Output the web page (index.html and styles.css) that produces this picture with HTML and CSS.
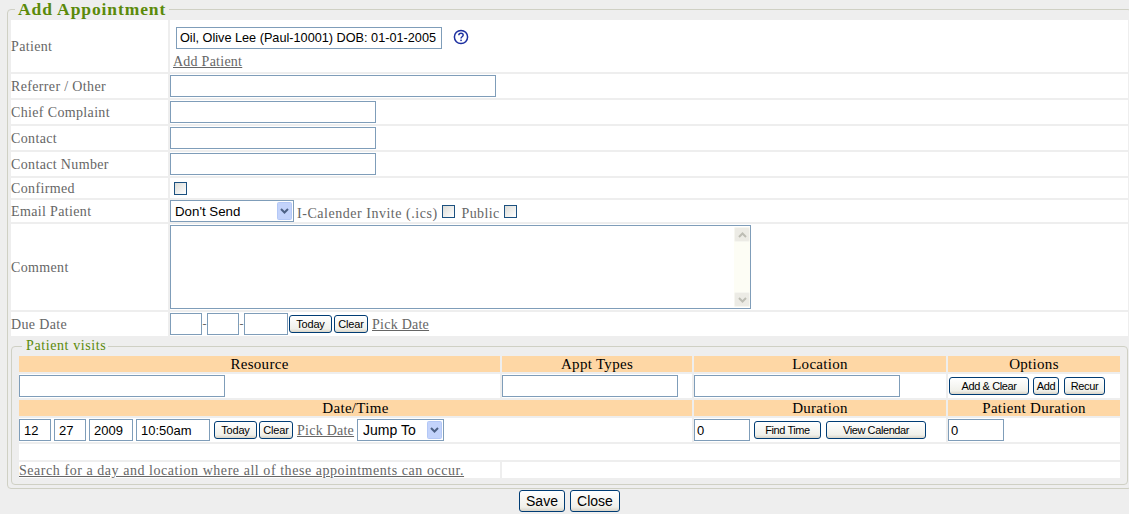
FILE: index.html
```html
<!DOCTYPE html>
<html lang="en">
<head>
  <meta charset="UTF-8" />
  <title>Add Appointment</title>
  <link rel="stylesheet" href="styles.css">
</head>
<body>
  <form id="form">
    <fieldset class="main-box">
      <legend>Add Appointment</legend>
      <table class="form-table">
        <colgroup><col class="label-col"><col></colgroup>
        <tr class="row-patient">
          <td class="label">Patient</td>
          <td class="patient-cell">
            <div class="patient-line">
              <input type="text" class="input-patient" value="Oil, Olive Lee (Paul-10001) DOB: 01-01-2005">
              <svg class="help-icon" width="16" height="16" viewBox="0 0 16 16">
                <circle cx="8" cy="8" r="6.6" fill="#fff" stroke="#1c2fa0" stroke-width="1.5"/>
                <path d="M5.800 6.300c0-1.400 1-2.100 2.200-2.100s2.200.7 2.200 1.900c0 1.700-2.200 1.600-2.200 3.300" fill="none" stroke="#1c2fa0" stroke-width="1.400"/>
                <rect x="7.300" y="10.600" width="1.500" height="1.500" fill="#1c2fa0"/>
              </svg>
            </div>
            <a class="link add-patient" href="#">Add Patient</a>
          </td>
        </tr>
        <tr class="row-input">
          <td class="label">Referrer / Other</td>
          <td><input type="text" class="input-wide"></td>
        </tr>
        <tr class="row-input">
          <td class="label">Chief Complaint</td>
          <td><input type="text" class="input-mid"></td>
        </tr>
        <tr class="row-input">
          <td class="label">Contact</td>
          <td><input type="text" class="input-mid"></td>
        </tr>
        <tr class="row-input">
          <td class="label">Contact Number</td>
          <td><input type="text" class="input-mid"></td>
        </tr>
        <tr class="row-check">
          <td class="label">Confirmed</td>
          <td><input type="checkbox" class="check check-confirmed"></td>
        </tr>
        <tr class="row-email">
          <td class="label">Email Patient</td>
          <td>
            <div class="inline-line">
              <select class="select select-email"><option>Don't Send</option></select>
              <span class="text ics-text">I-Calender Invite (.ics)</span>
              <input type="checkbox" class="check">
              <span class="text public-text">Public</span>
              <input type="checkbox" class="check">
            </div>
          </td>
        </tr>
        <tr class="row-comment">
          <td class="label">Comment</td>
          <td>
            <div class="comment-wrap">
              <textarea class="comment"></textarea>
              <div class="scrollbar">
                <span class="scroll-btn">
                  <svg width="9" height="6" viewBox="0 0 9 6"><path d="M1 5l3.500-3.500L8 5" fill="none" stroke="#bdbdb4" stroke-width="2"/></svg>
                </span>
                <span class="scroll-btn">
                  <svg width="9" height="6" viewBox="0 0 9 6"><path d="M1 1l3.500 3.500L8 1" fill="none" stroke="#bdbdb4" stroke-width="2"/></svg>
                </span>
              </div>
            </div>
          </td>
        </tr>
        <tr class="row-input">
          <td class="label">Due Date</td>
          <td>
            <div class="inline-line">
              <input type="text" class="input-md">
              <span class="dash">-</span>
              <input type="text" class="input-md">
              <span class="dash">-</span>
              <input type="text" class="input-y">
              <button type="button" class="btn btn-today">Today</button>
              <button type="button" class="btn btn-clear">Clear</button>
              <a class="link pick-date" href="#">Pick Date</a>
            </div>
          </td>
        </tr>
        <tr>
          <td colspan="2" class="visits-cell">
            <fieldset class="visits-box">
              <legend>Patient visits</legend>
              <table class="visits-table">
                <colgroup><col class="c1"><col class="c2"><col class="c3"><col class="c4"></colgroup>
                <tr class="head">
                  <th>Resource</th><th>Appt Types</th><th>Location</th><th>Options</th>
                </tr>
                <tr class="row-input">
                  <td><input type="text" class="input-mid"></td>
                  <td><input type="text" class="input-type"></td>
                  <td><input type="text" class="input-mid"></td>
                  <td>
                    <div class="inline-line">
                      <button type="button" class="btn btn-addclear">Add &amp; Clear</button>
                      <button type="button" class="btn btn-add">Add</button>
                      <button type="button" class="btn btn-recur">Recur</button>
                    </div>
                  </td>
                </tr>
                <tr class="head">
                  <th colspan="2">Date/Time</th><th>Duration</th><th>Patient Duration</th>
                </tr>
                <tr class="row-input">
                  <td colspan="2">
                    <div class="inline-line date-line">
                      <input type="text" class="input-md" value="12">
                      <input type="text" class="input-md" value="27">
                      <input type="text" class="input-y" value="2009">
                      <input type="text" class="input-time" value="10:50am">
                      <button type="button" class="btn btn-today">Today</button>
                      <button type="button" class="btn btn-clear">Clear</button>
                      <a class="link pick-date" href="#">Pick Date</a>
                      <select class="select select-jump"><option>Jump To</option></select>
                    </div>
                  </td>
                  <td>
                    <div class="inline-line">
                      <input type="text" class="input-dur" value="0">
                      <button type="button" class="btn btn-find">Find Time</button>
                      <button type="button" class="btn btn-view">View Calendar</button>
                    </div>
                  </td>
                  <td><input type="text" class="input-dur" value="0"></td>
                </tr>
                <tr class="row-empty"><td colspan="4"></td></tr>
                <tr class="row-search">
                  <td><a class="link search-link" href="#">Search for a day and location where all of these appointments can occur.</a></td>
                  <td colspan="3"></td>
                </tr>
              </table>
            </fieldset>
          </td>
        </tr>
      </table>
    </fieldset>
    <div class="actions">
      <button type="button" class="btn btn-big">Save</button>
      <button type="button" class="btn btn-big">Close</button>
    </div>
  </form>
</body>
</html>
```

FILE: styles.css
```css
html, body {
  height: 100%;
}

body {
  margin: 0;
  background: #eeeeee;
  font-family: "Liberation Serif", serif;
  font-size: 14px;
  color: #666666;
  overflow: hidden;
}

/* outer box */
.main-box {
  box-sizing: border-box;
  width: 1125px;
  margin: 0 0 0 7px;
  padding: 0 1px 1px;
  border: 1px solid #cfd0c4;
  border-radius: 4px;
  min-inline-size: 0;
}

.main-box > legend {
  margin-left: 6px;
  padding: 0 3px;
  font-size: 17.5px;
  line-height: 18px;
  font-weight: bold;
  letter-spacing: 0.9px;
  color: #5b8a0a;
}

table {
  border-spacing: 2px;
  border-collapse: separate;
  table-layout: fixed;
}

td, th {
  box-sizing: border-box;
  padding: 0;
}

td {
  background: #fff;
}

.form-table {
  width: 1121px;
}

.label-col {
  width: 157px;
}

.label {
  padding-top: 2px;
  letter-spacing: 0.35px;
}

.row-patient td { height: 52px; }
.row-input td { height: 24px; }
.row-check td { height: 20px; }
.row-email td { height: 22px; }
.row-comment td { height: 86px; }

input[type="text"], textarea, .select {
  box-sizing: border-box;
  display: block;
  margin: 0;
  height: 22px;
  padding: 0 4px;
  border: 1px solid #7f9db9;
  border-radius: 0;
  background-color: #fff;
  color: #000;
  font-family: "Liberation Sans", sans-serif;
  font-size: 13px;
  outline: none;
}

.patient-cell {
  vertical-align: top;
}

.patient-line {
  display: flex;
  align-items: center;
  margin: 7px 0 0 6px;
}

input.input-patient {
  width: 266px;
  padding: 0 2px 0 3px;
  font-size: 12.7px;
}

.help-icon { margin: -3px 0 0 11px; }

.add-patient {
  display: block;
  margin: 5px 0 0 3px;
  line-height: 16px;
  letter-spacing: 0.65px;
}

.link {
  color: #666666;
  text-decoration: underline;
  letter-spacing: 0.25px;
}

.input-wide { width: 326px; }
.input-mid { width: 206px; }
input.input-md { width: 32px; }
input.input-y { width: 44px; }
.input-type { width: 176px; }
.input-time { width: 74px; }
input.input-dur { width: 56px; padding: 0 2px; }

.check {
  appearance: none;
  box-sizing: border-box;
  display: block;
  width: 13px;
  height: 13px;
  margin: 0;
  border: 1px solid #1c5180;
  background: linear-gradient(135deg, #dcdcd7, #ffffff);
}

.check-confirmed { margin: 1px 0 0 4px; }

.inline-line {
  display: flex;
  align-items: center;
}

.select {
  appearance: none;
  padding: 0 0 0 4px;
  background-image: url("data:image/svg+xml,%3Csvg xmlns='http://www.w3.org/2000/svg' width='15' height='18'%3E%3Crect x='.5' y='.5' width='14' height='17' rx='1' fill='%23c3d3fb' stroke='%23b4c8f6'/%3E%3Cpath d='M4 7l3.500 3.500L11 7' fill='none' stroke='%234d6185' stroke-width='2'/%3E%3C/svg%3E");
  background-repeat: no-repeat;
  background-position: right 1px center;
}

.select-email { width: 124px; font-size: 13.3px; }
.select-jump { width: 87px; margin-left: 3px; padding-left: 5px; font-size: 14px; }

.text { letter-spacing: 0.53px; }
.ics-text { margin: 6px 4px 0 3px; }
.public-text { margin: 6px 4px 0 7px; letter-spacing: 0.35px; }

.comment-wrap {
  position: relative;
  width: 581px;
}

.comment {
  display: block;
  width: 581px;
  height: 84px;
  resize: none;
  overflow: hidden;
}

/* drawn bar, a real one does not show in every browser */
.scrollbar {
  position: absolute;
  top: 2px;
  right: 1px;
  bottom: 2px;
  width: 16px;
  display: flex;
  flex-direction: column;
  justify-content: space-between;
  background: #fdfdf5;
}

.scroll-btn {
  display: flex;
  align-items: center;
  justify-content: center;
  height: 15px;
  background: #ecebe5;
  border: 1px solid #f6f6f0;
  border-radius: 2px;
  box-sizing: border-box;
}

.dash { width: 5px; text-align: center; font-size: 12px; }

.btn {
  box-sizing: border-box;
  height: 18px;
  padding: 0;
  border: 1px solid #003c74;
  border-radius: 3px;
  background: linear-gradient(to bottom, #ffffff, #f0f0ea 80%, #d8d4c8);
  color: #000;
  font-family: "Liberation Sans", sans-serif;
  font-size: 11px;
  letter-spacing: -0.2px;
  cursor: pointer;
}

.btn-today { width: 43px; margin-left: 1px; }
.btn-clear { width: 34px; margin-left: 2px; }
.pick-date { margin: 2px 0 0 4px; }

/* patient visits */
.visits-cell {
  background: none;
}

.visits-box {
  box-sizing: border-box;
  width: 1117px;
  margin: 0;
  padding: 0 4px 4px 5px;
  border: 1px solid #cfd0c4;
  border-radius: 4px;
  min-inline-size: 0;
}

.visits-box > legend {
  margin-left: 5px;
  padding: 0 2px 0 4px;
  font-size: 14px;
  line-height: 16px;
  letter-spacing: 0.6px;
  color: #5b8a0a;
}

.visits-table {
  width: 1105px;
}

.c1 { width: 481px; }
.c2 { width: 190px; }
.c3 { width: 252px; }

th {
  height: 16px;
  padding-top: 1px;
  background: #fed7a5;
  color: #000;
  font-weight: normal;
  font-size: 15px;
  line-height: 15px;
  letter-spacing: 0.3px;
}

.btn-addclear, .btn-add, .btn-recur, .btn-find, .btn-view {
  letter-spacing: -0.4px;
}

.btn-addclear { width: 80px; margin-left: 1px; }
.btn-add { width: 26px; margin-left: 4px; }
.btn-recur { width: 41px; margin-left: 5px; }

.date-line input + input { margin-left: 3px; }
.date-line .btn-today { margin-left: 4px; }

.btn-find { width: 67px; margin-left: 4px; }
.btn-view { width: 100px; margin-left: 5px; }

.row-empty td { height: 16px; }
.row-search td { height: 16px; line-height: 16px; }

.search-link {
  position: relative;
  top: 1px;
  letter-spacing: 0.55px;
}

.actions {
  display: flex;
  justify-content: center;
  gap: 5px;
  margin: 0 0 0 10px;
  padding-top: 1px;
}

.btn-big {
  width: 46px;
  height: 22px;
  font-size: 14px;
  letter-spacing: 0;
}

.btn-big + .btn-big {
  width: 50px;
}
```
